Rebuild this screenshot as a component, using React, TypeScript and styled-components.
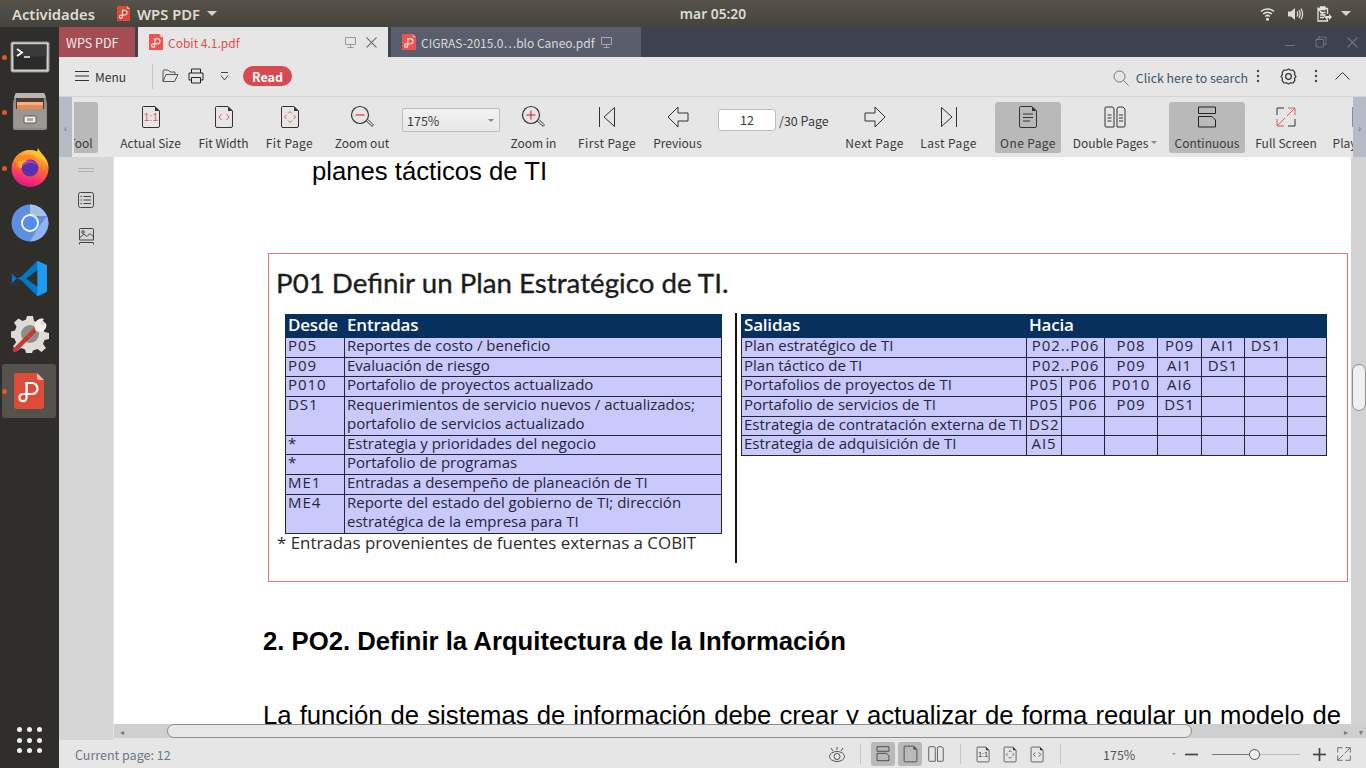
import React from "react";
import styled, { createGlobalStyle } from "styled-components";

const ui = `"Noto Sans CJK SC", "Noto Sans", sans-serif`;
const scan = `"Open Sans", "Noto Sans", sans-serif`;

const Global = createGlobalStyle`
  html, body { margin: 0; padding: 0; height: 100%; overflow: hidden; background: #e6e6e6; }
  #root { width: 1366px; height: 768px; }
  * { box-sizing: border-box; }
`;

const Screen = styled.div`
  width: 1366px;
  height: 768px;
  display: flex;
  flex-direction: column;
  font-family: ${ui};
  overflow: hidden;
`;

/* gnome top bar */
const TopBar = styled.div`
  height: 27px;
  flex: none;
  display: grid;
  grid-template-columns: 1fr auto 1fr;
  align-items: center;
  background: linear-gradient(#57534b, #46433c);
  color: #dcdcd4;
  font-family: "Noto Sans", sans-serif;
  font-size: 14.8px;
  font-weight: 600;
  padding: 0 15px 0 12px;
`;
const TopLeft = styled.div`
  display: flex;
  align-items: center;
`;
const AppName = styled.span`
  display: flex;
  align-items: center;
  gap: 7px;
  margin-left: 22px;
`;
const Clock = styled.span`
  margin-left: 63px;
  font-size: 13.8px;
`;
const Caret = styled.span<{ $size?: number; $color?: string }>`
  display: inline-block;
  width: 0;
  height: 0;
  border-left: ${(p) => p.$size ?? 5}px solid transparent;
  border-right: ${(p) => p.$size ?? 5}px solid transparent;
  border-top: ${(p) => p.$size ?? 5}px solid ${(p) => p.$color ?? "#d4d4cc"};
`;
const TopRight = styled.div`
  display: flex;
  align-items: center;
  justify-content: flex-end;
  gap: 13px;
  & > :last-child {
    margin-left: -4px;
  }
`;

const Body = styled.div`
  flex: 1;
  display: flex;
  min-height: 0;
`;

/* launcher */
const Dock = styled.div`
  width: 59px;
  flex: none;
  background: #302e2a;
  display: flex;
  flex-direction: column;
  padding-top: 2px;
`;
const DockSlot = styled.div<{ $active?: boolean }>`
  position: relative;
  height: ${(p) => (p.$active ? 54 : 55.5)}px;
  flex: none;
  display: flex;
  align-items: center;
  justify-content: center;
  margin: ${(p) => (p.$active ? "1.5px 3px 0 2px" : "0")};
  border-radius: 3px;
  background: ${(p) => (p.$active ? "#55524e" : "transparent")};
`;
const RunDot = styled.i<{ $left?: number }>`
  position: absolute;
  left: ${(p) => p.$left ?? 2}px;
  top: 50%;
  width: 5px;
  height: 5px;
  margin-top: -2px;
  border-radius: 50%;
  background: #e95420;
`;
const AppGrid = styled.div`
  margin: auto 0 15px 17px;
  display: grid;
  grid-template-columns: repeat(3, 4.5px);
  gap: 5.5px;
`;
const GridDot = styled.i`
  width: 5px;
  height: 5px;
  border-radius: 50%;
  background: #f0f0ee;
`;

const Window = styled.div`
  flex: 1;
  min-width: 0;
  display: flex;
  flex-direction: column;
  background: #e6e6e6;
`;

/* tabs */
const TabBar = styled.div`
  height: 30px;
  flex: none;
  display: flex;
  background: #3e4250;
  font-size: 12px;
`;
const HomeTab = styled.div`
  width: 76px;
  margin-right: 3px;
  background: #a64c53;
  color: #ececec;
  font-size: 12.5px;
  display: flex;
  align-items: center;
  padding-left: 7px;
`;
const DocTab = styled.div<{ $active?: boolean }>`
  width: 250px;
  margin-right: 3px;
  display: flex;
  align-items: center;
  padding: 0 11px;
  gap: 5px;
  background: ${(p) => (p.$active ? "#e6e6e6" : "#5a5d6b")};
  color: ${(p) => (p.$active ? "#dc5050" : "#d8d9de")};
`;
const TabTitle = styled.span<{ $grow?: boolean }>`
  flex: ${(p) => (p.$grow ? 1 : "none")};
  white-space: nowrap;
`;
const TabClose = styled.span`
  display: flex;
  margin-left: 4px;
`;
const WinButtons = styled.div`
  margin-left: auto;
  display: flex;
  align-items: center;
  gap: 20px;
  padding-right: 8px;
`;

/* menu row */
const MenuRow = styled.div`
  height: 40px;
  flex: none;
  display: flex;
  align-items: center;
  border-bottom: 1px solid #d4d4d4;
  padding: 0 16px 1px;
  color: #333;
  font-size: 12.5px;
`;
const MenuBtn = styled.div`
  display: flex;
  align-items: center;
  gap: 6px;
  font-size: 12px;
`;
const VSep = styled.i<{ $h?: number; $ml?: number; $mr?: number }>`
  width: 1px;
  height: ${(p) => p.$h ?? 25}px;
  margin: 0 ${(p) => p.$mr ?? 0}px 0 ${(p) => p.$ml ?? 0}px;
  background: #c4c4c4;
  flex: none;
`;
const MenuIcons = styled.div`
  display: flex;
  align-items: center;
  gap: 9px;
`;
const FoldBtn = styled.span`
  display: flex;
  margin-left: 16px;
`;
const ReadPill = styled.span`
  width: 49px;
  height: 20px;
  margin-left: 14px;
  border-radius: 10px;
  background: #d64a50;
  color: #fff;
  font-weight: 700;
  font-size: 12.5px;
  display: flex;
  align-items: center;
  justify-content: center;
`;
const SearchBox = styled.div`
  margin-left: auto;
  display: flex;
  align-items: center;
  gap: 7px;
  color: #3e5468;
  font-size: 12.4px;
  padding-top: 3px;
`;
const MenuTail = styled.div`
  display: flex;
  align-items: center;
  margin-left: 8px;
`;
const TailItem = styled.span<{ $ml?: number }>`
  display: flex;
  margin-left: ${(p) => p.$ml ?? 0}px;
`;

/* ribbon */
const Ribbon = styled.div`
  height: 60px;
  flex: none;
  display: flex;
  align-items: stretch;
  color: #3a3a3a;
  font-size: 12px;
`;
const StripArrow = styled.div<{ $right?: boolean }>`
  width: 13px;
  flex: none;
  background: #b7bbc5;
  margin: ${(p) => (p.$right ? "0" : "0 2px 0 0")};
  color: #666;
  font-size: 10px;
  display: flex;
  align-items: center;
  justify-content: center;
`;
const Strip = styled.div`
  flex: 1;
  min-width: 0;
  display: flex;
  align-items: center;
  overflow: hidden;
`;
const ToolBtn = styled.div<{ $w: number; $ml: number; $active?: boolean }>`
  width: ${(p) => p.$w}px;
  margin-left: ${(p) => p.$ml}px;
  height: 51px;
  flex: none;
  border-radius: 3px;
  background: ${(p) => (p.$active ? "#b9b9b9" : "transparent")};
  display: flex;
  flex-direction: column;
  align-items: center;
  white-space: nowrap;
  padding-top: 3px;
`;
const IconBox = styled.div`
  height: 24px;
  display: flex;
  align-items: center;
  justify-content: center;
`;
const ToolLabel = styled.span<{ $track?: boolean }>`
  margin-top: 6px;
  line-height: 16px;
  letter-spacing: ${(p) => (p.$track ? "0.4px" : "0")};
  display: flex;
  align-items: center;
  gap: 3px;
`;
const ZoomSelect = styled.div`
  width: 98px;
  height: 24px;
  margin: 0 0 14px 8px;
  flex: none;
  border: 1px solid #bdbdbd;
  border-radius: 2px;
  background: linear-gradient(#f2f2f2, #e8e8e8);
  display: flex;
  align-items: center;
  justify-content: space-between;
  padding: 0 5px 0 4px;
  font-size: 12.5px;
`;
const PageInput = styled.div`
  width: 58px;
  height: 22px;
  margin: 0 0 14px 11px;
  flex: none;
  border: 1px solid #bdbdbd;
  border-radius: 3px;
  background: #fff;
  text-align: center;
  line-height: 20px;
  font-size: 12.5px;
`;
const PageCount = styled.span`
  width: 52px;
  margin: 0 0 14px 3px;
  flex: none;
  white-space: nowrap;
  font-size: 12.5px;
`;

/* middle */
const Middle = styled.div`
  flex: 1;
  min-height: 0;
  display: flex;
`;
const SideRail = styled.div`
  width: 55px;
  flex: none;
  background: #d6d6d6;
  border-right: 1px solid #e4e4e4;
  display: flex;
  flex-direction: column;
  align-items: center;
  padding-top: 11px;
`;
const RailHandle = styled.i`
  width: 16px;
  height: 4px;
  border-top: 1px solid #b0b0b0;
  border-bottom: 1px solid #b0b0b0;
  margin-bottom: 20px;
`;
const RailIcon = styled.div`
  height: 36px;
  display: flex;
  justify-content: center;
`;
const Viewer = styled.div`
  flex: 1;
  min-width: 0;
  display: flex;
  flex-direction: column;
`;
const ViewerTop = styled.div`
  flex: 1;
  min-height: 0;
  display: flex;
`;
const PageView = styled.div`
  flex: 1;
  min-width: 0;
  overflow: hidden;
  background: #fff;
  color: #000;
  font-family: "Liberation Sans", Arial, sans-serif;
  font-size: 25.7px;
`;
const ListLine = styled.p`
  margin: 0 0 0 198px;
  line-height: 29px;
  height: 29px;
`;
const Frame = styled.div`
  width: 1080px;
  height: 329px;
  margin: 67px 0 0 154px;
  border: 1px solid #e27676;
  padding: 11px 0 0 8px;
  font-family: ${scan};
`;
const FrameTitle = styled.h3`
  margin: 0 0 0 -1px;
  font-family: Lato, sans-serif;
  font-weight: 400;
  -webkit-text-stroke: 0.35px #1c1c1c;
  font-size: 27.7px;
  line-height: 36px;
  color: #1c1c1c;
  white-space: nowrap;
`;
const TableRow = styled.div`
  display: flex;
  align-items: flex-start;
  margin-top: 13px;
`;
const LeftCol = styled.div`
  width: 458px;
  flex: none;
`;
const Grid = styled.table<{ $w: number; $ml: number }>`
  width: ${(p) => p.$w}px;
  margin-left: ${(p) => p.$ml}px;
  table-layout: fixed;
  border-collapse: collapse;
  font-size: 15px;
  color: #26263c;
`;
const Th = styled.th`
  height: 22px;
  padding: 0 2px 3px;
  background: #07305f;
  color: #fff;
  font-size: 17px;
  font-weight: 600;
  text-align: left;
  border: 1px solid #07305f;
  line-height: 19px;
  letter-spacing: -0.2px;
`;
const Td = styled.td<{ $center?: boolean; $code?: boolean }>`
  height: 19.7px;
  padding: 0 2px 2.7px;
  background: #c9c9fb;
  border: 1px solid #23233a;
  letter-spacing: ${(p) => (p.$code || p.$center ? "0.9px" : "0")};
  line-height: 17px;
  vertical-align: top;
  white-space: nowrap;
  text-align: ${(p) => (p.$center ? "center" : "left")};
`;
const CellLine = styled.div`
  margin-top: -1px;
  & + & {
    margin-top: 2px;
  }
`;
const Footnote = styled.p`
  margin: -1px 0 0;
  font-size: 16.9px;
  line-height: 20px;
  color: #2c2c2c;
  white-space: nowrap;
`;
const Divider = styled.i`
  width: 2px;
  height: 250px;
  margin-top: -1px;
  flex: none;
  background: #111;
`;
const Heading = styled.h2`
  margin: 45px 0 0 149px;
  font-size: 25.7px;
  line-height: 28px;
  font-weight: 700;
  white-space: nowrap;
`;
const Para = styled.p`
  margin: 46px 0 0 149px;
  width: 1078px;
  line-height: 28px;
  white-space: nowrap;
  text-align: justify;
  text-align-last: justify;
`;
const VTrack = styled.div`
  width: 15px;
  flex: none;
  background: #d2d2d2;
  padding-top: 207px;
`;
const VThumb = styled.div`
  width: 14px;
  height: 47px;
  margin-left: 1px;
  background: #f0f0f0;
  border: 1px solid #8e8e8e;
  border-radius: 7px;
`;
const HTrack = styled.div`
  height: 14px;
  margin-bottom: 2px;
  flex: none;
  display: flex;
  align-items: center;
  background: #cfcfcf;
  color: #777;
  font-size: 8px;
  padding-left: 6px;
`;
const HThumb = styled.div`
  width: 1025px;
  height: 14px;
  margin-left: 43px;
  background: #e8e8e8;
  border: 1px solid #8e8e8e;
  border-radius: 7px;
`;
const HEnd = styled.div`
  margin-left: auto;
  display: flex;
  gap: 11px;
  padding-right: 3px;
`;

/* status */
const StatusBar = styled.div`
  height: 28px;
  flex: none;
  display: flex;
  align-items: center;
  padding: 0 15px 0 16px;
  background: #e6e6e6;
  color: #6d7683;
  font-size: 12.5px;
`;
const StatusTools = styled.div`
  margin-left: auto;
  display: flex;
  align-items: center;
`;
const StatusBtn = styled.div<{ $active?: boolean; $w?: number; $ml?: number }>`
  width: ${(p) => p.$w ?? 24}px;
  height: 24px;
  margin-left: ${(p) => p.$ml ?? 0}px;
  border-radius: 3px;
  background: ${(p) => (p.$active ? "#b9b9b9" : "transparent")};
  display: flex;
  align-items: center;
  justify-content: center;
`;
const ZoomValue = styled.span`
  width: 115px;
  display: flex;
  align-items: center;
  justify-content: space-between;
  padding-left: 42px;
  color: #555;
`;
const Slider = styled.div`
  position: relative;
  width: 88px;
  height: 1px;
  margin: 0 13px 0 14px;
  background: linear-gradient(to right, #777 49%, #bdbdbd 49%);
`;
const SliderKnob = styled.i`
  position: absolute;
  left: 37px;
  top: -5px;
  width: 11px;
  height: 11px;
  border-radius: 50%;
  background: #f2f2f2;
  border: 1px solid #555;
`;

const ink = "#333";
const red = "#e05c5c";

function WpsIcon({ w = 14, fill = "#ef5350" }: { w?: number; fill?: string }) {
  return (
    <svg width={w} height={(w * 36) / 30} viewBox="0 0 30 36">
      <path d="M2 0H23L30 7V33Q30 36 27 36H3Q0 36 0 33V2Q0 0 2 0Z" fill={fill} />
      <path d="M23 0L30 7H25Q23 7 23 5Z" fill="#f6b3aa" />
      <path
        d="M11 10H18A5.5 5.5 0 0 1 18 21H9A3.6 3.6 0 1 0 12.6 24.6V10"
        fill="none"
        stroke="#fff"
        strokeWidth="2.2"
      />
    </svg>
  );
}

function Sheet({ children, w = 20, h = 24 }: { children?: React.ReactNode; w?: number; h?: number }) {
  return (
    <svg width={w} height={h} viewBox="0 0 20 24" fill="none" stroke={ink}>
      <path d="M2.5 1.5H14L18.5 6V21Q18.5 22.5 17 22.5H3Q1.5 22.5 1.5 21V2.5Q1.5 1.5 2.5 1.5Z" />
      <path d="M14 1.5V6H18.5" fill="#333" stroke="none" />
      {children}
    </svg>
  );
}

const ActualIcon = ({ size = 24 }: { size?: number }) => (
  <Sheet w={(size * 20) / 24} h={size}>
    <text x="10" y="16" textAnchor="middle" fontSize="10.5" fontFamily="Liberation Sans" fill={size < 20 ? ink : red} stroke="none">
      1:1
    </text>
  </Sheet>
);
const FitWidthIcon = ({ size = 24 }: { size?: number }) => (
  <Sheet w={(size * 20) / 24} h={size}>
    <path d="M7.5 9L5 12L7.5 15M12.5 9L15 12L12.5 15" stroke={size < 20 ? ink : red} />
  </Sheet>
);
const FitPageIcon = ({ size = 24 }: { size?: number }) => (
  <Sheet w={(size * 20) / 24} h={size}>
    <path d="M8 8.500L10 6.500L12 8.500M8 15.500L10 17.500L12 15.500M6.500 10L4.500 12L6.500 14M13.500 10L15.500 12L13.500 14" stroke={size < 20 ? ink : red} />
  </Sheet>
);
const Magnifier = ({ plus }: { plus?: boolean }) => (
  <svg width="25" height="24" viewBox="0 0 25 24" fill="none" stroke={ink}>
    <circle cx="10" cy="10" r="8.5" strokeWidth="1.2" />
    <path d="M16.5 16L21 20.5Q22.5 22 23 20.5Q23.5 19.5 22 18.5L18 14.5" />
    <path d="M5.5 10H14.5" stroke="#d33" strokeWidth="1.2" />
    {plus && <path d="M10 5.5V14.5" stroke="#d33" strokeWidth="1.2" />}
  </svg>
);
const FirstIcon = () => (
  <svg width="18" height="22" viewBox="0 0 18 22" fill="none" stroke={ink}>
    <path d="M1.5 1V21" />
    <path d="M16.5 1.5V20.5L6 11Z" />
  </svg>
);
const LastIcon = () => (
  <svg width="18" height="22" viewBox="0 0 18 22" fill="none" stroke={ink}>
    <path d="M16.5 1V21" />
    <path d="M1.5 1.5V20.5L12 11Z" />
  </svg>
);
const PrevIcon = () => (
  <svg width="22" height="22" viewBox="0 0 22 22" fill="none" stroke={ink}>
    <path d="M11 1L1 11L11 21V15H21V7H11Z" strokeLinejoin="round" />
  </svg>
);
const NextIcon = () => (
  <svg width="22" height="22" viewBox="0 0 22 22" fill="none" stroke={ink}>
    <path d="M11 1L21 11L11 21V15H1V7H11Z" strokeLinejoin="round" />
  </svg>
);
const OnePageIcon = () => (
  <Sheet>
    <path d="M5 9H15M5 12.5H15M5 16H12" />
  </Sheet>
);
const DoubleIcon = ({ h = 22 }: { h?: number }) => (
  <svg width={h} height={h} viewBox="0 0 22 22" fill="none" stroke={ink}>
    <path d="M2 1H8Q10 1 10 3V21H2Q1 21 1 20V2Q1 1 2 1Z" />
    <path d="M13 3Q13 1 15 1H19L21 3V20Q21 21 20 21H13Z" />
    {h > 20 && <path d="M3.5 9H7.5M3.5 12H7.5M3.5 15H7.5M15 9H19M15 12H19M15 15H19" />}
  </svg>
);
const ContinuousIcon = ({ s = 1 }: { s?: number }) => (
  <svg width={20 * s} height={22 * s} viewBox="0 0 20 22" fill="none" stroke="#222">
    <path d="M1.5 1H18.5V7.5H1.5Z" />
    <path d="M1.5 10.5H15L18.5 14V21H1.5Z" />
  </svg>
);
const FullIcon = ({ mono }: { mono?: boolean }) => {
  const c = mono ? ink : red;
  return (
    <svg width="20" height="20" viewBox="0 0 20 20" fill="none" stroke={ink}>
      <path d="M1 8V1H8M12 19H19V12" />
      <path d="M12 1H19V8M19 1L11 9M1 12V19H8M1 19L9 11" stroke={c} />
    </svg>
  );
};
const ClippedIcon = () => (
  <svg width="20" height="24" viewBox="0 0 20 24" fill="none" stroke={ink}>
    <path d="M1 2V22" />
  </svg>
);
const Monitor = ({ c }: { c: string }) => (
  <svg width="13" height="13" viewBox="0 0 13 13" fill="none" stroke={c}>
    <path d="M1.5 1.5H11.5V8.5H1.5ZM6.5 8.5V11.5M3.5 11.5H9.5" />
  </svg>
);
const Cross = ({ c, s = 11 }: { c: string; s?: number }) => (
  <svg width={s} height={s} viewBox="0 0 11 11" stroke={c} strokeWidth="1.1">
    <path d="M.5 .5L10.5 10.5M10.5 .5L.5 10.5" />
  </svg>
);
const Dots3 = () => (
  <svg width="4" height="14" viewBox="0 0 4 14" fill="#444">
    <circle cx="2" cy="2" r="1.2" />
    <circle cx="2" cy="7" r="1.2" />
    <circle cx="2" cy="12" r="1.2" />
  </svg>
);

const TerminalApp = () => (
  <svg width="40" height="32" viewBox="0 0 40 32">
    <rect x="1" y="1" width="38" height="30" rx="1.5" fill="#cfcfcb" stroke="#8d8d89" />
    <rect x="3.5" y="3.5" width="33" height="25" fill="#2b2b2b" />
    <rect x="3.5" y="3.5" width="33" height="12" fill="#3a3a3a" />
    <path d="M7 8L12 11.5L7 15" fill="none" stroke="#fff" strokeWidth="1.8" />
    <path d="M14 16H20" stroke="#fff" strokeWidth="1.5" />
  </svg>
);
const FilesApp = () => (
  <svg width="36" height="38" viewBox="0 0 36 38">
    <path d="M3 2Q3 0 5 0H31Q33 0 33 2L35 10V35Q35 37 33 37H3Q1 37 1 35V10Z" fill="#8f8b86" />
    <path d="M3 2Q3 0 5 0H31Q33 0 33 2L34 5H2Z" fill="#b9b6b0" />
    <rect x="4" y="5" width="28" height="14" fill="#4a3a33" />
    <rect x="5" y="9" width="26" height="4" fill="#f4b183" />
    <rect x="5" y="12" width="26" height="7" fill="#e9874e" />
    <rect x="2" y="16" width="32" height="19" rx="1" fill="#9a9792" />
    <rect x="12" y="23" width="12" height="7" rx="1" fill="#efefed" stroke="#5a5a58" />
    <rect x="15" y="25" width="6" height="3" fill="#a9a9a6" />
  </svg>
);
const FirefoxApp = () => (
  <svg width="38" height="40" viewBox="0 0 38 40">
    <defs>
      <linearGradient id="ffBody" x1="0.7" y1="0" x2="0.4" y2="1">
        <stop offset="0" stopColor="#ffd33f" />
        <stop offset="0.4" stopColor="#ff7a2c" />
        <stop offset="0.75" stopColor="#ff3368" />
        <stop offset="1" stopColor="#d41a8c" />
      </linearGradient>
    </defs>
    <circle cx="19" cy="20.500" r="18.500" fill="url(#ffBody)" />
    <path d="M27 0C30 6 37 10 37.500 20C36 14 31 10 24 9C26 6 26 3 27 0Z" fill="#ffc52e" />
    <path d="M3 12C5 8 8 5 12 8C17 5 25 7 29 15C25 10 19 11 15 14C11 15 8 18 5 15Z" fill="#ff8a1f" />
    <circle cx="19" cy="20" r="8.500" fill="#5a2fb0" />
    <path d="M12 14C16 10 24 12 27 18C23 14 17 14 12 18Z" fill="#a43fc0" />
    <path d="M6 18C7 13 12 11 17 13C12 14 11 17 11 20C9 20 7 19 6 18Z" fill="#ffb02c" />
  </svg>
);
const ChromiumApp = () => (
  <svg width="38" height="38" viewBox="0 0 38 38">
    <circle cx="19" cy="19" r="18.5" fill="#5f8fe4" />
    <path d="M19 .5A18.5 18.5 0 0 1 36 12H19Z" fill="#a9c0ea" />
    <path d="M36 12A18.5 18.5 0 0 1 19 37.5L27 24Z" fill="#8fb3f3" />
    <circle cx="19" cy="19" r="8" fill="#4f8ff3" stroke="#fff" strokeWidth="1.8" />
  </svg>
);
const CodeApp = () => (
  <svg width="37" height="37" viewBox="0 0 100 100">
    <path d="M71 2L27 46L9 32L2 37V63L9 68L27 54L71 98L97 86V14Z" fill="#0078c8" />
    <path d="M71 2L97 14V86L71 98Z" fill="#1f9cf0" />
    <path d="M71 28V72L41 50Z" fill="#302e2a" />
    <path d="M2 37L9 32L27 46L16 50ZM2 63L9 68L27 54L16 50Z" fill="#302e2a" />
  </svg>
);
const ToolsApp = () => (
  <svg width="38" height="38" viewBox="0 0 38 38">
    <path
      d="M16 1H22L23 6L27 7.5L31 4.500L35 9L32 13L33.500 17L38 18V24L33.500 25L32 29L35 33L30.500 37L26.500 34L22 35.500L21 38H15L14 34.500L10 33L6 36L2 31.500L5 27.500L3.500 23.500L0 22.500V16.500L4 15.500L5.500 11.500L3 7.500L7.500 3.500L11.500 6L15 4.500Z"
      fill="#dedcd8"
    />
    <circle cx="19" cy="19" r="9" fill="#8f8d88" />
    <path d="M4 35L26 13" stroke="#c33b30" strokeWidth="4.500" strokeLinecap="round" />
    <path d="M24 14C22 8 27 2 33 4L29 8L31 11L35 8C37 14 31 19 25 16Z" fill="#f2f0ec" />
  </svg>
);
const Wifi = () => (
  <svg width="15" height="14" viewBox="0 0 15 14" fill="none" stroke="#e4e4de" strokeWidth="1.6">
    <path d="M1 4.500A9.500 9.500 0 0 1 14 4.500M3.200 7A6.500 6.500 0 0 1 11.800 7M5.300 9.500A3.200 3.200 0 0 1 9.700 9.500" />
    <circle cx="7.500" cy="12.300" r="1.500" fill="#e4e4de" stroke="none" />
  </svg>
);
const Volume = () => (
  <svg width="16" height="14" viewBox="0 0 16 14" fill="none" stroke="#ddddd6" strokeWidth="1.300">
    <path d="M0 4.500H3L7 1V13L3 9.500H0Z" fill="#ddddd6" stroke="none" />
    <path d="M9 4.500Q10.500 7 9 9.500M11 3Q13.300 7 11 11M13 1.500Q16.200 7 13 12.500" />
  </svg>
);
const Clipboard = () => (
  <svg width="15" height="16" viewBox="0 0 15 16" fill="none" stroke="#e4e4de" strokeWidth="1.300">
    <path d="M1 2.500H10.500V8M10.500 13.500V15H1V2.500Z" />
    <path d="M3.500 .8H8V3.500H3.500Z" fill="#e4e4de" />
    <path d="M3 6.500H8.500M3 9H8.500M3 11.500H7" />
    <path d="M9 10H12V8L15 11L12 14V12H9Z" fill="#e4e4de" stroke="none" />
  </svg>
);
const FolderIcon = () => (
  <svg width="17" height="14" viewBox="0 0 17 14" fill="none" stroke="#555">
    <path d="M1 12.500V2Q1 1 2 1H6L8 3H13V5.500M1 12.500H12.500L16 5.500H4L1 12.500Z" />
  </svg>
);
const PrintIcon = () => (
  <svg width="16" height="16" viewBox="0 0 16 16" fill="none" stroke="#222">
    <path d="M3.500 5V1H12.500V5M3.500 12H1V5H15V12H12.500" strokeLinejoin="round" />
    <path d="M3.500 9.500H12.500V15H3.500Z" />
  </svg>
);
const FoldIcon = () => (
  <svg width="9" height="9" viewBox="0 0 9 9" fill="none" stroke="#444">
    <path d="M1 .5H8M1 3.500L4.500 8L8 3.500" />
  </svg>
);
const SearchIcon = () => (
  <svg width="16" height="16" viewBox="0 0 16 16" fill="none" stroke="#777">
    <circle cx="6.500" cy="6.500" r="5.500" />
    <path d="M10.500 10.500L15.500 15.500" />
  </svg>
);
const Gear = () => (
  <svg width="17" height="17" viewBox="0 0 24 24" fill="none" stroke="#333" strokeWidth="1.700">
    <path d="M12 1.500L15 3.200L18.500 2.800L21 6.500L20.500 9.500L22.500 12L20.500 14.500L21 17.500L18.500 21.200L15 20.800L12 22.500L9 20.800L5.500 21.200L3 17.500L3.500 14.500L1.500 12L3.500 9.500L3 6.500L5.500 2.800L9 3.200Z" strokeLinejoin="round" />
    <circle cx="12" cy="12" r="4" />
  </svg>
);
const ChevronUp = () => (
  <svg width="15" height="8" viewBox="0 0 15 8" fill="none" stroke="#333">
    <path d="M.5 7.500L7.500 .5L14.500 7.500" />
  </svg>
);
const ListIcon = () => (
  <svg width="16" height="16" viewBox="0 0 16 16" fill="none" stroke="#444">
    <rect x=".5" y=".5" width="15" height="15" rx="2" />
    <path d="M5.500 4.500H13M5.500 8H13M5.500 11.500H13M2.500 4.500H4M2.500 8H4M2.500 11.500H4" />
  </svg>
);
const PictureIcon = () => (
  <svg width="15" height="17" viewBox="0 0 15 17" fill="none" stroke="#444">
    <path d="M.5 12V1.500Q.5 .5 1.500 .5H13.500Q14.500 .5 14.500 1.500V12M.5 12H14.500" />
    <circle cx="4" cy="4" r="1.300" />
    <path d="M.5 10L5 6L8 8.500L11 5.500L14.500 9" />
    <path d="M.5 16.500V15Q.5 14.500 1 14.500H14Q14.500 14.500 14.500 15V16.500" />
  </svg>
);
const EyeIcon = () => (
  <svg width="18" height="18" viewBox="0 0 18 18" fill="none" stroke="#555">
    <ellipse cx="9" cy="11.500" rx="7.500" ry="5" />
    <circle cx="9" cy="11.500" r="3" />
    <path d="M3 3L5 6M9 2V5M15 3L13 6" />
  </svg>
);
const PlusMinus = ({ plus }: { plus?: boolean }) => (
  <svg width="13" height="13" viewBox="0 0 13 13" stroke="#444" strokeWidth="1.700">
    <path d="M0 6.500H13" />
    {plus && <path d="M6.500 0V13" />}
  </svg>
);

type Tool = { label: string; w: number; ml: number; active?: boolean; caret?: boolean; track?: boolean; icon?: React.ReactNode };

const tools: Tool[] = [
  { label: "Tool", w: 35, ml: -11, active: true },
  { label: "Actual Size", w: 71, ml: 17, icon: <ActualIcon /> },
  { label: "Fit Width", w: 61, ml: 7, icon: <FitWidthIcon /> },
  { label: "Fit Page", w: 57, ml: 7, track: true, icon: <FitPageIcon /> },
  { label: "Zoom out", w: 64, ml: 12, icon: <Magnifier /> },
];
const tools2: Tool[] = [
  { label: "Zoom in", w: 55, ml: 6, icon: <Magnifier plus /> },
  { label: "First Page", w: 68, ml: 12, track: true, icon: <FirstIcon /> },
  { label: "Previous", w: 59, ml: 7, icon: <PrevIcon /> },
];
const tools3: Tool[] = [
  { label: "Next Page", w: 69, ml: 9, track: true, icon: <NextIcon /> },
  { label: "Last Page", w: 67, ml: 6, track: true, icon: <LastIcon /> },
  { label: "One Page", w: 66, ml: 13, active: true, track: true, icon: <OnePageIcon /> },
  { label: "Double Pages", w: 96, ml: 6, caret: true, icon: <DoubleIcon /> },
  { label: "Continuous", w: 76, ml: 6, active: true, icon: <ContinuousIcon /> },
  { label: "Full Screen", w: 72, ml: 5, icon: <FullIcon /> },
  { label: "Play Mode", w: 65, ml: 7, icon: <ClippedIcon /> },
];

const renderTool = (t: Tool) => (
  <ToolBtn key={t.label} $w={t.w} $ml={t.ml} $active={t.active}>
    <IconBox>{t.icon}</IconBox>
    <ToolLabel $track={t.track}>
      {t.label}
      {t.caret && <Caret $size={3} $color="#888" />}
    </ToolLabel>
  </ToolBtn>
);

const entradas = [
  { from: "P05", text: ["Reportes de costo / beneficio"] },
  { from: "P09", text: ["Evaluación de riesgo"] },
  { from: "P010", text: ["Portafolio de proyectos actualizado"] },
  { from: "DS1", text: ["Requerimientos de servicio nuevos / actualizados;", "portafolio de servicios actualizado"] },
  { from: "*", text: ["Estrategia y prioridades del negocio"] },
  { from: "*", text: ["Portafolio de programas"] },
  { from: "ME1", text: ["Entradas a desempeño de planeación de TI"] },
  { from: "ME4", text: ["Reporte del estado del gobierno de TI; dirección", "estratégica de la empresa para TI"] },
];

const salidas = [
  { name: "Plan estratégico de TI", wide: "P02..P06", to: ["P08", "P09", "AI1", "DS1", "", ""] },
  { name: "Plan táctico de TI", wide: "P02..P06", to: ["P09", "AI1", "DS1", "", "", ""] },
  { name: "Portafolios de proyectos de TI", to: ["P05", "P06", "P010", "AI6", "", "", "", ""] },
  { name: "Portafolio de servicios de TI", to: ["P05", "P06", "P09", "DS1", "", "", "", ""] },
  { name: "Estrategia de contratación externa de TI", to: ["DS2", "", "", "", "", "", "", ""] },
  { name: "Estrategia de adquisición de TI", to: ["AI5", "", "", "", "", "", "", ""] },
];

export default function App() {
  return (
    <Screen>
      <Global />
      <TopBar>
        <TopLeft>
          <span>Actividades</span>
          <AppName>
            <WpsIcon w={13} fill="#e0483c" />
            WPS PDF
            <Caret />
          </AppName>
        </TopLeft>
        <Clock>mar 05:20</Clock>
        <TopRight>
          <Wifi />
          <Volume />
          <Clipboard />
          <Caret />
        </TopRight>
      </TopBar>
      <Body>
        <Dock>
          <DockSlot>
            <RunDot />
            <TerminalApp />
          </DockSlot>
          <DockSlot>
            <RunDot />
            <FilesApp />
          </DockSlot>
          <DockSlot>
            <RunDot />
            <FirefoxApp />
          </DockSlot>
          <DockSlot>
            <ChromiumApp />
          </DockSlot>
          <DockSlot>
            <CodeApp />
          </DockSlot>
          <DockSlot>
            <ToolsApp />
          </DockSlot>
          <DockSlot $active>
            <RunDot $left={0} />
            <WpsIcon w={30} fill="#dd4b39" />
          </DockSlot>
          <AppGrid>
            {Array.from({ length: 9 }, (_, i) => (
              <GridDot key={i} />
            ))}
          </AppGrid>
        </Dock>
        <Window>
          <TabBar>
            <HomeTab>WPS PDF</HomeTab>
            <DocTab $active>
              <WpsIcon />
              <TabTitle $grow>Cobit 4.1.pdf</TabTitle>
              <Monitor c="#9a9a9a" />
              <TabClose>
                <Cross c="#777" />
              </TabClose>
            </DocTab>
            <DocTab>
              <WpsIcon />
              <TabTitle>CIGRAS-2015.0⋯blo Caneo.pdf</TabTitle>
              <Monitor c="#a4a6b0" />
            </DocTab>
            <WinButtons>
              <svg width="10" height="10" viewBox="0 0 10 10" stroke="#70747f">
                <path d="M0 8.500H10" />
              </svg>
              <svg width="12" height="12" viewBox="0 0 12 12" fill="none" stroke="#70747f">
                <path d="M3.500 3V1H11V8.500H8.500M1 3.500H8.500V11H1Z" />
              </svg>
              <Cross c="#70747f" />
            </WinButtons>
          </TabBar>
          <MenuRow>
            <MenuBtn>
              <svg width="14" height="10" viewBox="0 0 14 10" stroke="#333">
                <path d="M0 .5H14M0 5H14M0 9.500H14" />
              </svg>
              Menu
            </MenuBtn>
            <VSep $ml={26} $mr={9} />
            <MenuIcons>
              <FolderIcon />
              <PrintIcon />
            </MenuIcons>
            <FoldBtn>
              <FoldIcon />
            </FoldBtn>
            <ReadPill>Read</ReadPill>
            <SearchBox>
              <SearchIcon />
              Click here to search
            </SearchBox>
            <MenuTail>
              <Dots3 />
              <TailItem $ml={20}>
                <Gear />
              </TailItem>
              <TailItem $ml={17}>
                <Dots3 />
              </TailItem>
              <TailItem $ml={17}>
                <ChevronUp />
              </TailItem>
            </MenuTail>
          </MenuRow>
          <Ribbon>
            <StripArrow>‹</StripArrow>
            <Strip>
              {tools.map(renderTool)}
              <ZoomSelect>
                175%
                <Caret $size={3} $color="#888" />
              </ZoomSelect>
              {tools2.map(renderTool)}
              <PageInput>12</PageInput>
              <PageCount>/30 Page</PageCount>
              {tools3.map(renderTool)}
            </Strip>
            <StripArrow $right>›</StripArrow>
          </Ribbon>
          <Middle>
            <SideRail>
              <RailHandle />
              <RailIcon>
                <ListIcon />
              </RailIcon>
              <RailIcon>
                <PictureIcon />
              </RailIcon>
            </SideRail>
            <Viewer>
              <ViewerTop>
                <PageView>
                  <ListLine>planes tácticos de TI</ListLine>
                  <Frame>
                    <FrameTitle>P01 Definir un Plan Estratégico de TI.</FrameTitle>
                    <TableRow>
                      <LeftCol>
                        <Grid $w={437} $ml={8}>
                          <colgroup>
                            <col width="59" />
                            <col />
                          </colgroup>
                          <thead>
                            <tr>
                              <Th>Desde</Th>
                              <Th>Entradas</Th>
                            </tr>
                          </thead>
                          <tbody>
                            {entradas.map((e, i) => (
                              <tr key={i}>
                                <Td $code>
                                  <CellLine>{e.from}</CellLine>
                                </Td>
                                <Td>
                                  {e.text.map((line) => (
                                    <CellLine key={line}>{line}</CellLine>
                                  ))}
                                </Td>
                              </tr>
                            ))}
                          </tbody>
                        </Grid>
                        <Footnote>* Entradas provenientes de fuentes externas a COBIT</Footnote>
                      </LeftCol>
                      <Divider />
                      <Grid $w={585} $ml={4}>
                        <colgroup>
                          <col width="285" />
                          <col width="35" />
                          <col width="43" />
                          <col width="53" />
                          <col width="44" />
                          <col width="43" />
                          <col width="43" />
                          <col width="39" />
                        </colgroup>
                        <thead>
                          <tr>
                            <Th>Salidas</Th>
                            <Th colSpan={7}>Hacia</Th>
                          </tr>
                        </thead>
                        <tbody>
                          {salidas.map((s) => (
                            <tr key={s.name}>
                              <Td>
                                <CellLine>{s.name}</CellLine>
                              </Td>
                              {s.wide && (
                                <Td $center colSpan={2}>
                                  <CellLine>{s.wide}</CellLine>
                                </Td>
                              )}
                              {s.to.map((c, i) => (
                                <Td $center key={i}>
                                  <CellLine>{c}</CellLine>
                                </Td>
                              ))}
                            </tr>
                          ))}
                        </tbody>
                      </Grid>
                    </TableRow>
                  </Frame>
                  <Heading>2. PO2. Definir la Arquitectura de la Información</Heading>
                  <Para>La función de sistemas de información debe crear y actualizar de forma regular un modelo de</Para>
                </PageView>
                <VTrack>
                  <VThumb />
                </VTrack>
              </ViewerTop>
              <HTrack>
                ◂
                <HThumb />
                <HEnd>
                  <span>▸</span>
                  <span>▾</span>
                </HEnd>
              </HTrack>
            </Viewer>
          </Middle>
          <StatusBar>
            Current page: 12
            <StatusTools>
              <EyeIcon />
              <VSep $h={20} $ml={14} $mr={10} />
              <StatusBtn $active>
                <ContinuousIcon s={0.7} />
              </StatusBtn>
              <StatusBtn $active $ml={3}>
                <Sheet w={15} h={18} />
              </StatusBtn>
              <StatusBtn $ml={2}>
                <DoubleIcon h={16} />
              </StatusBtn>
              <VSep $h={20} $ml={12} $mr={10} />
              <StatusBtn>
                <ActualIcon size={17} />
              </StatusBtn>
              <StatusBtn $ml={3}>
                <FitPageIcon size={17} />
              </StatusBtn>
              <StatusBtn $ml={3}>
                <FitWidthIcon size={17} />
              </StatusBtn>
              <VSep $h={20} $ml={11} />
              <ZoomValue>
                175%
                <Caret $size={2.5} $color="#999" />
              </ZoomValue>
              <StatusBtn $w={13} $ml={9}>
                <PlusMinus />
              </StatusBtn>
              <Slider>
                <SliderKnob />
              </Slider>
              <StatusBtn $w={13}>
                <PlusMinus plus />
              </StatusBtn>
              <StatusBtn $w={14} $ml={11}>
                <svg width="14" height="14" viewBox="0 0 20 20" fill="none" stroke="#444">
                  <path d="M1 8V1H8M12 19H19V12M12 1H19V8M19 1L11 9M1 12V19H8M1 19L9 11" />
                </svg>
              </StatusBtn>
            </StatusTools>
          </StatusBar>
        </Window>
      </Body>
    </Screen>
  );
}
